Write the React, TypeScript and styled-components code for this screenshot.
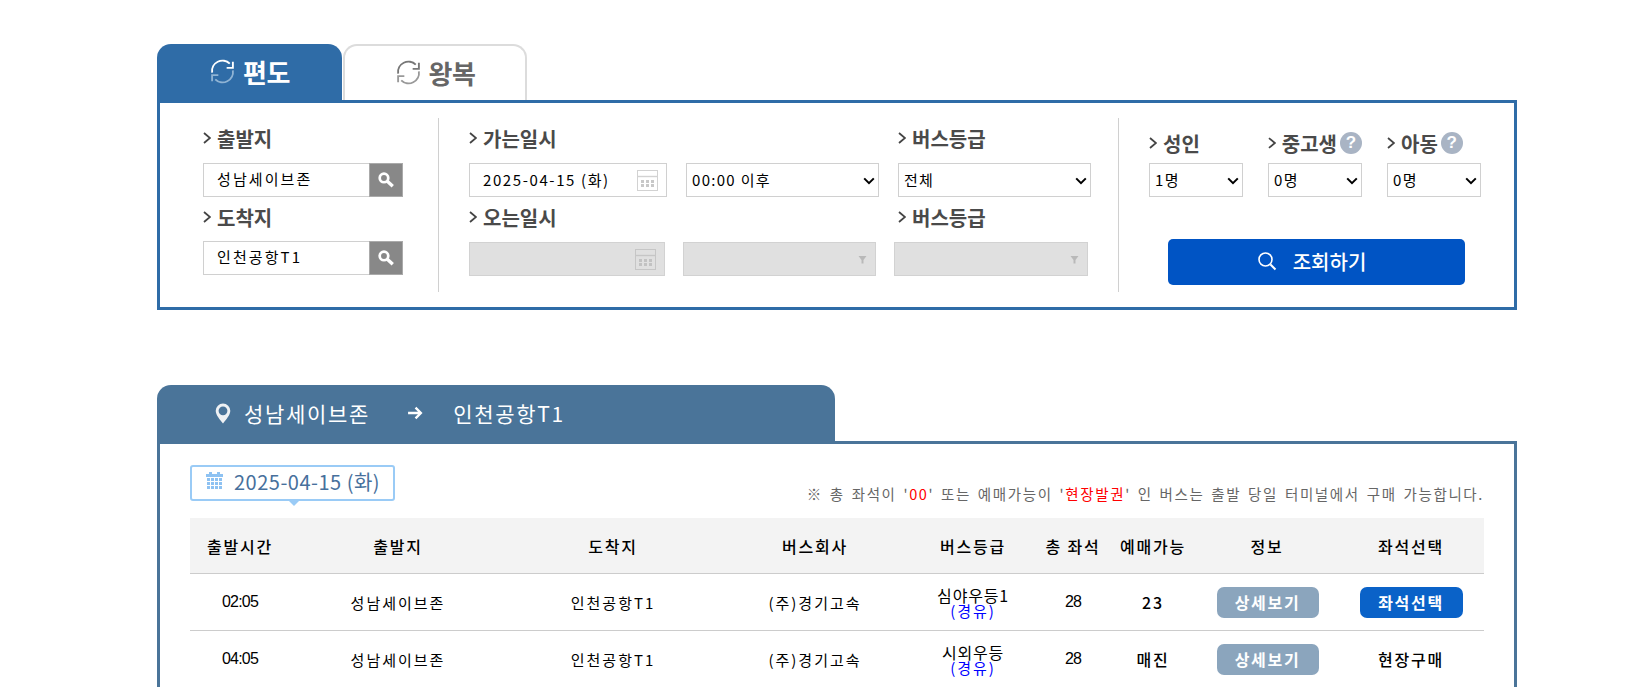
// App.tsx
import React from "react";
import styled, { createGlobalStyle } from "styled-components";

const GlobalStyle = createGlobalStyle`
    html, body {
        margin: 0;
        height: 687px;
        overflow: hidden;
        background: #fff;
    }
    body, select, button, input {
        font-family: "Noto Sans CJK KR", "Noto Sans", sans-serif;
    }
`;

const Page = styled.div`
    width: 1360px;
    padding: 44px 0 0 157px;
`;

/* ---------- tabs ---------- */
const TabBar = styled.div`
    display: flex;
    gap: 1px;
    height: 56px;
`;

const Tab = styled.div<{ $active?: boolean }>`
    width: ${(p) => (p.$active ? "185px" : "184px")};
    box-sizing: border-box;
    display: flex;
    align-items: center;
    justify-content: center;
    gap: 7px;
    padding-bottom: 1px;
    border-radius: 14px 14px 0 0;
    background: ${(p) => (p.$active ? "#2f6ca7" : "#fff")};
    border: ${(p) => (p.$active ? "none" : "2px solid #dcdcdc")};
    border-bottom: none;
    color: ${(p) => (p.$active ? "#fff" : "#666")};
    font-size: 26px;
    font-weight: 700;
    letter-spacing: -0.5px;
`;

/* ---------- search panel ---------- */
const SearchPanel = styled.div`
    box-sizing: border-box;
    height: 210px;
    border: 3px solid #2f6ca7;
    display: flex;
    padding: 15px 0;
`;

const FromToSection = styled.div`
    width: 279px;
    box-sizing: border-box;
    padding: 8px 0 0 43px;
    border-right: 1px solid #d0d0d0;
`;

const DateSection = styled.div`
    width: 680px;
    box-sizing: border-box;
    padding: 8px 0 0 30px;
    border-right: 1px solid #d0d0d0;
`;

const PassengerSection = styled.div`
    flex: 1;
    padding: 13px 0 0 30px;
`;

const FieldLabel = styled.div`
    display: flex;
    align-items: center;
    gap: 6px;
    height: 24px;
    color: #4a4a4a;
    font-size: 20px;
    font-weight: 700;
    letter-spacing: 0;
    white-space: nowrap;
`;

const LabelRow = styled.div<{ $second?: boolean; $cols: string }>`
    display: grid;
    grid-template-columns: ${(p) => p.$cols};
    margin: ${(p) => (p.$second ? "8px 0 13px" : "0 0 13px")};
`;

const PlaceLabel = styled(FieldLabel)<{ $second?: boolean }>`
    margin: ${(p) => (p.$second ? "8px 0 12px" : "0 0 13px")};
`;

const PlaceBox = styled.div`
    width: 200px;
    height: 34px;
    box-sizing: border-box;
    display: flex;
    border: 1px solid #d0d0d0;
    background: #fff;
`;

const PlaceText = styled.div`
    flex: 1;
    padding-left: 13px;
    line-height: 30px;
    font-size: 15px;
    letter-spacing: 2.1px;
    color: #000;
`;

const SearchSquare = styled.div`
    width: 34px;
    margin: -1px -1px -1px 0;
    display: flex;
    align-items: center;
    justify-content: center;
    background: #888;
    border: 1px solid #aaa;
    box-sizing: border-box;
`;

const ControlRow = styled.div<{ $cols: string; $gap: number }>`
    display: grid;
    grid-template-columns: ${(p) => p.$cols};
    column-gap: ${(p) => p.$gap}px;
    height: 34px;
`;

const DateBox = styled.div`
    box-sizing: border-box;
    display: flex;
    align-items: center;
    justify-content: space-between;
    padding: 0 8px 0 13px;
    border: 1px solid #d0d0d0;
    font-size: 15px;
    line-height: 30px;
    letter-spacing: 1.6px;
    color: #000;
    white-space: nowrap;
`;

const chevronSvg =
    "%3Csvg xmlns='http://www.w3.org/2000/svg' width='12' height='8' viewBox='0 0 12 8'%3E%3Cpath d='M1.2 1.4L6 6.2L10.8 1.4' fill='none' stroke='%23000' stroke-width='2'/%3E%3C/svg%3E";

const NativeSelect = styled.select`
    box-sizing: border-box;
    width: 100%;
    height: 34px;
    padding: 0 0 2px 5px;
    border: 1px solid #d0d0d0;
    border-radius: 0;
    appearance: none;
    background: #fff url("data:image/svg+xml,${chevronSvg}") no-repeat right 3px center;
    background-position: right 3px top 13px;
    font-size: 15px;
    letter-spacing: 1.3px;
    color: #000;
    outline: none;
`;

const DisabledBox = styled.div`
    box-sizing: border-box;
    display: flex;
    align-items: center;
    justify-content: flex-end;
    padding-right: 8px;
    background: #e0e0e0;
    border: 1px solid #d2d2d2;
`;

const PassengerGrid = styled.div`
    display: grid;
    grid-template-columns: repeat(3, 94px);
    column-gap: 25px;
    row-gap: 8px;
`;

const HelpDot = styled.span`
    width: 22px;
    height: 22px;
    margin-left: -3px;
    border-radius: 50%;
    background: #a9b4c4;
    color: #fff;
    font-family: "Liberation Sans", sans-serif;
    font-size: 17px;
    font-weight: 700;
    line-height: 22px;
    text-align: center;
    flex: none;
`;

const SubmitButton = styled.button`
    display: flex;
    align-items: center;
    justify-content: center;
    gap: 16px;
    width: 297px;
    height: 46px;
    margin: 42px 0 0 19px;
    padding: 0 10px 2px 0;
    border: none;
    border-radius: 5px;
    background: #0054c4;
    color: #fff;
    font-size: 20px;
    font-weight: 500;
`;

/* ---------- result ---------- */
const RouteTab = styled.div`
    width: 678px;
    height: 59px;
    margin-top: 75px;
    box-sizing: border-box;
    display: flex;
    align-items: center;
    padding: 0 0 3px 58px;
    border-radius: 14px 14px 0 0;
    background: #4a7499;
    color: #fff;
    font-size: 21px;
    letter-spacing: 1.7px;
`;

const RouteName = styled.span`
    margin-left: 13px;
`;

const RouteArrow = styled.span`
    display: flex;
    margin: 0 30px 0 37px;
`;

const ResultPanel = styled.div`
    box-sizing: border-box;
    height: 246px;
    margin-top: -3px;
    padding: 21px 30px 0;
    border: 3px solid #4a7499;
    border-bottom: none;
    position: relative;
`;

const RouteOverlap = styled.div`
    position: absolute;
    top: -3px;
    left: -3px;
    width: 678px;
    height: 3px;
    background: #4a7499;
`;

const InfoRow = styled.div`
    display: flex;
    justify-content: space-between;
    align-items: flex-end;
    height: 53px;
`;

const DateChip = styled.div`
    position: relative;
    box-sizing: border-box;
    display: flex;
    align-items: center;
    gap: 11px;
    width: 205px;
    height: 36px;
    margin-bottom: 17px;
    padding: 0 0 4px 14px;
    border: 2px solid #9acbf6;
    border-radius: 3px;
    color: #47709c;
    font-size: 20px;
    letter-spacing: 0.5px;
    white-space: nowrap;
    &::after {
        content: "";
        position: absolute;
        left: 97px;
        bottom: -7px;
        border-left: 5px solid transparent;
        border-right: 5px solid transparent;
        border-top: 5px solid #9acbf6;
    }
`;

const Notice = styled.div`
    padding-bottom: 14px;
    color: #666;
    font-size: 14.5px;
    line-height: 20px;
    letter-spacing: 1.63px;
    word-spacing: 2px;
    white-space: nowrap;
`;

const RedText = styled.span`
    color: #f00;
`;

const COLS = "100px 216px 214px 190px 126px 74px 86px 142px 146px";

const HeadRow = styled.div`
    display: grid;
    grid-template-columns: ${COLS};
    align-items: center;
    height: 56px;
    box-sizing: border-box;
    background: #f3f3f3;
    border-bottom: 1px solid #ccc;
    text-align: center;
    color: #000;
    font-size: 16px;
    font-weight: 500;
    letter-spacing: 1.8px;
`;

const BusRow = styled.div`
    display: grid;
    grid-template-columns: ${COLS};
    align-items: center;
    height: 57px;
    box-sizing: border-box;
    border-bottom: 1px solid #ccc;
    text-align: center;
    color: #000;
    font-size: 15px;
    letter-spacing: 2px;
`;

const TimeCell = styled.div`
    font-family: "Liberation Sans", sans-serif;
    font-size: 16px;
    letter-spacing: -0.8px;
`;

const GradeCell = styled.div`
    line-height: 15px;
    padding-top: 1px;
    font-size: 16px;
    letter-spacing: 0.8px;
`;

const ViaText = styled.div`
    color: #00f;
    font-size: 15px;
    letter-spacing: 2px;
`;

const StrongCell = styled.div`
    font-weight: 500;
    font-size: 16px;
    letter-spacing: 1.8px;
`;

const RowButton = styled.button<{ $primary?: boolean }>`
    justify-self: center;
    width: ${(p) => (p.$primary ? "103px" : "102px")};
    height: 31px;
    margin-left: ${(p) => (p.$primary ? "0" : "1px")};
    padding: 0;
    border: none;
    border-radius: 7px;
    background: ${(p) => (p.$primary ? "#0a62c8" : "#8ba5bd")};
    color: #fff;
    font-size: 16px;
    font-weight: 700;
    letter-spacing: 1.7px;
`;

/* ---------- drawings ---------- */
function RefreshIcon({ color, fade }: { color: string; fade: string }) {
    return (
        <svg width="27" height="27" viewBox="0 0 26 26" fill="none" strokeWidth="1.8">
            <path d="M3 14A10 10 0 0 1 20 5.5" stroke={color} />
            <path d="M23 3.5V9.5H17" stroke={color} fill="none" />
            <path d="M23 12A10 10 0 0 1 6 20.5" stroke={fade} />
            <path d="M3 22.5V16.5H9" stroke={fade} fill="none" />
        </svg>
    );
}

function Chevron() {
    return (
        <svg width="8" height="14" viewBox="0 0 8 14" fill="none" stroke="#444" strokeWidth="1.8">
            <path d="M1 2L7 7L1 12" />
        </svg>
    );
}

function Magnifier() {
    return (
        <svg width="18" height="18" viewBox="0 0 16 16" fill="none" stroke="#fff">
            <circle cx="6.2" cy="6.2" r="3.8" strokeWidth="2.4" />
            <path d="M9.2 9.2L14 13.6" strokeWidth="3" />
        </svg>
    );
}

function CalendarIcon({ dim }: { dim?: boolean }) {
    const line = dim ? "#c6c6c6" : "#d2d2d2";
    const cell = dim ? "#c2c2c2" : "#c8c8c8";
    const cells = [5, 10, 15].flatMap((x) => [11, 15].map((y) => [x, y]));
    return (
        <svg width="21" height="21" viewBox="0 0 21 21">
            <rect x="0.5" y="0.5" width="20" height="20" fill="none" stroke={line} />
            <path d="M1 6.5H20" stroke={line} strokeWidth="1.4" />
            {cells.map(([x, y]) => (
                <rect key={`${x}-${y}`} x={x - 1} y={y - 1} width="3" height="3" fill={cell} />
            ))}
        </svg>
    );
}

function DisabledArrow() {
    return (
        <svg width="9" height="9" viewBox="0 0 9 9">
            <path d="M0.5 1H8.5L5.5 5V8.5H3.5V5Z" fill="#b9b9b9" />
        </svg>
    );
}

function PinIcon() {
    return (
        <svg width="16" height="21" viewBox="0 0 16 21">
            <path
                fillRule="evenodd"
                d="M8 0.5A7.3 7.3 0 0 1 15.3 7.8C15.3 12 11 17 8 20.5C5 17 0.7 12 0.7 7.8A7.3 7.3 0 0 1 8 0.5ZM8 3.4A4.4 4.4 0 1 0 8 12.2A4.4 4.4 0 1 0 8 3.4Z"
                fill="#eef1f4"
            />
        </svg>
    );
}

function ArrowIcon() {
    return (
        <svg width="16" height="14" viewBox="0 0 15 13" fill="none" stroke="#fff" strokeWidth="2.2">
            <path d="M1 6.5H13M8 1.5L13 6.5L8 11.5" />
        </svg>
    );
}

function ChipCalendar() {
    const cols = [1, 5, 9, 13];
    const rows = [6, 10, 14];
    return (
        <svg width="17" height="18" viewBox="0 0 17 18">
            <rect x="3" y="0" width="3" height="4" fill="#8ec2f2" />
            <rect x="11" y="0" width="3" height="4" fill="#8ec2f2" />
            <rect x="0" y="2" width="17" height="3" fill="#8ec2f2" />
            {cols.map((x) =>
                rows.map((y) => <rect key={`${x}-${y}`} x={x} y={y} width="3" height="3" fill="#8ec2f2" />)
            )}
        </svg>
    );
}

function ButtonSearch() {
    return (
        <svg width="20" height="20" viewBox="0 0 20 20" fill="none" stroke="#fff" strokeWidth="1.6">
            <circle cx="8.5" cy="8.5" r="6.5" />
            <path d="M13.5 13.5L18.5 18.5" strokeWidth="2" />
        </svg>
    );
}

const Label = ({ children }: { children: React.ReactNode }) => (
    <>
        <Chevron />
        {children}
    </>
);

const buses = [
    { time: "02:05", grade: "심야우등1", seats: "28", left: "23", action: "select" },
    { time: "04:05", grade: "시외우등", seats: "28", left: "매진", action: "onsite" },
];

export default function App() {
    return (
        <Page>
            <GlobalStyle />
            <TabBar>
                <Tab $active>
                    <RefreshIcon color="#fff" fade="#8fb3d4" />
                    편도
                </Tab>
                <Tab>
                    <RefreshIcon color="#777" fade="#999" />
                    왕복
                </Tab>
            </TabBar>

            <SearchPanel>
                <FromToSection>
                    <PlaceLabel><Label>출발지</Label></PlaceLabel>
                    <PlaceBox>
                        <PlaceText>성남세이브존</PlaceText>
                        <SearchSquare><Magnifier /></SearchSquare>
                    </PlaceBox>
                    <PlaceLabel $second><Label>도착지</Label></PlaceLabel>
                    <PlaceBox>
                        <PlaceText>인천공항T1</PlaceText>
                        <SearchSquare><Magnifier /></SearchSquare>
                    </PlaceBox>
                </FromToSection>

                <DateSection>
                    <LabelRow $cols="429px 1fr">
                        <FieldLabel><Label>가는일시</Label></FieldLabel>
                        <FieldLabel><Label>버스등급</Label></FieldLabel>
                    </LabelRow>
                    <ControlRow $cols="198px 193px 193px" $gap={19}>
                        <DateBox>
                            2025-04-15 (화)
                            <CalendarIcon />
                        </DateBox>
                        <NativeSelect defaultValue="00:00 이후">
                            <option>00:00 이후</option>
                        </NativeSelect>
                        <NativeSelect defaultValue="전체">
                            <option>전체</option>
                        </NativeSelect>
                    </ControlRow>
                    <LabelRow $second $cols="429px 1fr">
                        <FieldLabel><Label>오는일시</Label></FieldLabel>
                        <FieldLabel><Label>버스등급</Label></FieldLabel>
                    </LabelRow>
                    <ControlRow $cols="196px 193px 194px" $gap={18}>
                        <DisabledBox><CalendarIcon dim /></DisabledBox>
                        <DisabledBox><DisabledArrow /></DisabledBox>
                        <DisabledBox><DisabledArrow /></DisabledBox>
                    </ControlRow>
                </DateSection>

                <PassengerSection>
                    <PassengerGrid>
                        <FieldLabel><Label>성인</Label></FieldLabel>
                        <FieldLabel><Label>중고생</Label><HelpDot>?</HelpDot></FieldLabel>
                        <FieldLabel><Label>아동</Label><HelpDot>?</HelpDot></FieldLabel>
                        <NativeSelect defaultValue="1명"><option>1명</option></NativeSelect>
                        <NativeSelect defaultValue="0명"><option>0명</option></NativeSelect>
                        <NativeSelect defaultValue="0명"><option>0명</option></NativeSelect>
                    </PassengerGrid>
                    <SubmitButton>
                        <ButtonSearch />
                        조회하기
                    </SubmitButton>
                </PassengerSection>
            </SearchPanel>

            <RouteTab>
                <PinIcon />
                <RouteName>성남세이브존</RouteName>
                <RouteArrow><ArrowIcon /></RouteArrow>
                인천공항T1
            </RouteTab>

            <ResultPanel>
                <RouteOverlap />
                <InfoRow>
                    <DateChip>
                        <ChipCalendar />
                        2025-04-15 (화)
                    </DateChip>
                    <Notice>
                        ※ 총 좌석이 '<RedText>00</RedText>' 또는 예매가능이 '<RedText>현장발권</RedText>' 인 버스는 출발 당일 터미널에서 구매 가능합니다.
                    </Notice>
                </InfoRow>

                <HeadRow>
                    <div>출발시간</div>
                    <div>출발지</div>
                    <div>도착지</div>
                    <div>버스회사</div>
                    <div>버스등급</div>
                    <div>총 좌석</div>
                    <div>예매가능</div>
                    <div>정보</div>
                    <div>좌석선택</div>
                </HeadRow>

                {buses.map((bus) => (
                    <BusRow key={bus.time}>
                        <TimeCell>{bus.time}</TimeCell>
                        <div>성남세이브존</div>
                        <div>인천공항T1</div>
                        <div>(주)경기고속</div>
                        <GradeCell>
                            {bus.grade}
                            <ViaText>(경유)</ViaText>
                        </GradeCell>
                        <TimeCell>{bus.seats}</TimeCell>
                        <StrongCell>{bus.left}</StrongCell>
                        <RowButton>상세보기</RowButton>
                        {bus.action === "select" ? (
                            <RowButton $primary>좌석선택</RowButton>
                        ) : (
                            <StrongCell>현장구매</StrongCell>
                        )}
                    </BusRow>
                ))}
            </ResultPanel>
        </Page>
    );
}
